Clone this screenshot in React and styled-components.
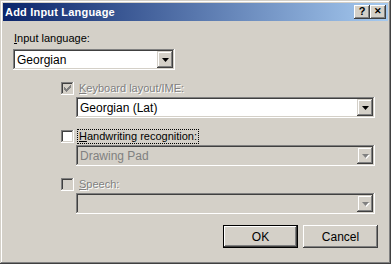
import styled, { createGlobalStyle } from "styled-components";

const GlobalStyle = createGlobalStyle`
	html, body {
		margin: 0;
		padding: 0;
		background: #d4d0c8;
	}
	body {
		font-family: "Liberation Sans", Arial, sans-serif;
		font-size: 11px;
		color: #000;
	}
`;

const ArrowIcon = ({ disabled }) => (
	<svg width="7" height="4" viewBox="0 0 7 4" style={{ overflow: "visible" }}>
		{disabled && <path d="M1 1h7l-3.5 4z" fill="#fff" />}
		<path d="M0 0h7l-3.5 4z" fill={disabled ? "#808080" : "#000"} />
	</svg>
);

const CheckIcon = ({ color }) => (
	<svg width="7" height="7" viewBox="0 0 7 7">
		<path
			d="M0 2h1v1h1v1h1v-1h1v-1h1v-1h1v-1h1v3h-1v1h-1v1h-1v1h-1v1h-1v-1h-1v-1h-1z"
			fill={color}
		/>
	</svg>
);

const Combo = ({ value, disabled }) => (
	<ComboBox $disabled={disabled}>
		<ComboText $disabled={disabled}>{value}</ComboText>
		<DropButton>
			<ArrowIcon disabled={disabled} />
		</DropButton>
	</ComboBox>
);

const Check = ({ checked, disabled }) => (
	<CheckBox $disabled={disabled}>
		{checked && <CheckIcon color={disabled ? "#808080" : "#000"} />}
	</CheckBox>
);

const App = () => {
	return (
		<>
			<GlobalStyle />
			<Window>
				<TitleBar>
					<Title>Add Input Language</Title>
					<CaptionButtons>
						<CaptionButton>?</CaptionButton>
						<CaptionButton $close>✕</CaptionButton>
					</CaptionButtons>
				</TitleBar>
				<Body>
					<Label>
						<u>I</u>nput language:
					</Label>
					<LangCombo>
						<Combo value="Georgian" />
					</LangCombo>
					<Options>
						<Row>
							<Check checked disabled />
							<RowLabel $disabled>
								<u>K</u>eyboard layout/IME:
							</RowLabel>
						</Row>
						<WideCombo>
							<Combo value="Georgian (Lat)" />
						</WideCombo>
						<Row>
							<Check />
							<RowLabel $focused>
								<u>H</u>andwriting recognition:
							</RowLabel>
						</Row>
						<WideCombo>
							<Combo value="Drawing Pad" disabled />
						</WideCombo>
						<Row>
							<Check disabled />
							<RowLabel $disabled>
								<u>S</u>peech:
							</RowLabel>
						</Row>
						<WideCombo>
							<Combo value="" disabled />
						</WideCombo>
					</Options>
					<Footer>
						<Button $default>OK</Button>
						<Button>Cancel</Button>
					</Footer>
				</Body>
			</Window>
		</>
	);
};

export default App;

const Window = styled.div`
	width: 391px;
	height: 264px;
	box-sizing: border-box;
	padding: 3px;
	background: #d4d0c8;
	box-shadow: inset -1px -1px #404040, inset 1px 1px #d4d0c8,
		inset -2px -2px #808080, inset 2px 2px #ffffff;
	display: flex;
	flex-direction: column;
`;

const TitleBar = styled.div`
	height: 18px;
	display: flex;
	align-items: center;
	justify-content: space-between;
	padding: 0 2px 0 2px;
	background: linear-gradient(to right, #0a246a, #a6caf0);
`;

const Title = styled.div`
	color: #fff;
	font-weight: bold;
	font-size: 11px;
	letter-spacing: 0.2px;
`;

const CaptionButtons = styled.div`
	display: flex;
	gap: 0;
`;

const CaptionButton = styled.div`
	width: 16px;
	height: 14px;
	box-sizing: border-box;
	background: #d4d0c8;
	box-shadow: inset -1px -1px #404040, inset 1px 1px #ffffff,
		inset -2px -2px #808080, inset 2px 2px #d4d0c8;
	display: flex;
	align-items: center;
	justify-content: center;
	font-weight: bold;
	font-size: ${(p) => (p.$close ? "9px" : "11px")};
	line-height: 1;
	color: #000;
	padding-bottom: 1px;
`;

const Body = styled.div`
	flex: 1;
	display: flex;
	flex-direction: column;
	padding: 11px 10px 0 10px;
`;

const Label = styled.div`
	padding-left: 1px;
	line-height: 13px;
	height: 13px;
`;

const LangCombo = styled.div`
	width: 162px;
	margin-top: 4px;
`;

const Options = styled.div`
	display: flex;
	flex-direction: column;
	padding-left: 48px;
`;

const Row = styled.div`
	height: 16px;
	margin-top: 10px;
	display: flex;
	align-items: center;
	gap: 4px;
`;

const RowLabel = styled.span`
	line-height: 13px;
	padding: 0 1px;
	color: ${(p) => (p.$disabled ? "#808080" : "#000")};
	text-shadow: ${(p) => (p.$disabled ? "1px 1px #ffffff" : "none")};
	outline: ${(p) => (p.$focused ? "1px dotted #000" : "none")};
`;

const WideCombo = styled.div`
	margin-top: 1px;
	margin-left: 15px;
	width: 299px;
`;

const ComboBox = styled.div`
	height: 21px;
	box-sizing: border-box;
	padding: 2px;
	display: flex;
	align-items: stretch;
	background: ${(p) => (p.$disabled ? "#d4d0c8" : "#ffffff")};
	box-shadow: inset -1px -1px #ffffff, inset 1px 1px #808080,
		inset -2px -2px #d4d0c8, inset 2px 2px #404040;
`;

const ComboText = styled.div`
	flex: 1;
	display: flex;
	align-items: center;
	padding-left: 2px;
	font-size: 12px;
	color: ${(p) => (p.$disabled ? "#808080" : "#000")};
`;

const DropButton = styled.div`
	width: 16px;
	box-sizing: border-box;
	background: #d4d0c8;
	display: flex;
	align-items: center;
	justify-content: center;
	box-shadow: inset -1px -1px #404040, inset 1px 1px #d4d0c8,
		inset -2px -2px #808080, inset 2px 2px #ffffff;
`;

const CheckBox = styled.div`
	width: 13px;
	height: 13px;
	box-sizing: border-box;
	flex-shrink: 0;
	display: flex;
	align-items: center;
	justify-content: center;
	background: ${(p) => (p.$disabled ? "#d4d0c8" : "#ffffff")};
	box-shadow: inset -1px -1px #ffffff, inset 1px 1px #808080,
		inset -2px -2px #d4d0c8, inset 2px 2px #404040;
`;

const Footer = styled.div`
	margin-top: 11px;
	display: flex;
	justify-content: flex-end;
	gap: 5px;
`;

const Button = styled.div`
	width: 75px;
	height: 23px;
	box-sizing: border-box;
	display: flex;
	align-items: center;
	justify-content: center;
	font-size: 12px;
	background: #d4d0c8;
	box-shadow: ${(p) =>
		p.$default
			? "inset 0 0 0 1px #000, inset -2px -2px #404040, inset 2px 2px #ffffff, inset -3px -3px #808080"
			: "inset -1px -1px #404040, inset 1px 1px #ffffff, inset -2px -2px #808080, inset 2px 2px #d4d0c8"};
`;
